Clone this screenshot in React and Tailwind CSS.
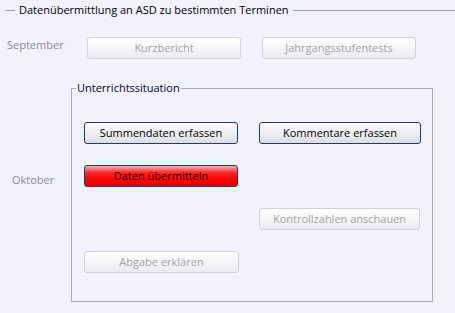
import React from 'react';

function Btn({ children, w = 'w-[154px]', variant = 'normal' }) {
  const styles = {
    normal:
      'border-[#1f3c72] text-black bg-[linear-gradient(to_bottom,#fdfdff_0%,#f0f0f6_45%,#dcdce6_100%)]',
    red: 'border-[#1f3c72] text-[#2a0000] bg-[linear-gradient(to_bottom,#ffb0b0_0%,#ff2020_35%,#ff0000_70%,#e40000_100%)]',
    disabled:
      'border-[#d2d2da] text-[#a2a2aa] bg-[linear-gradient(to_bottom,#ffffff_0%,#f6f6f9_50%,#eaeaf0_100%)]',
  };
  return (
    <div className={`${w} h-[22px] flex items-center justify-center rounded-[3px] border ${styles[variant]}`}>
      {children}
    </div>
  );
}

export default function App() {
  return (
    <div className="w-[455px] h-[313px] bg-[#f2f2fd] text-[11px] leading-4 text-black overflow-hidden font-['Open_Sans',sans-serif]">
      {/* Outer group header */}
      <div className="flex items-center pt-[2px] pl-[5px]">
        <div className="w-[10px] h-px bg-[#a0a0a8]"></div>
        <span className="px-[4px]">Datenübermittlung an ASD zu bestimmten Terminen</span>
        <div className="flex-1 h-px bg-[#a0a0a8]"></div>
      </div>

      {/* September row */}
      <div className="flex mt-[19px]">
        <div className="w-[87px] pl-[7px] text-[#8c8c98]">September</div>
        <div className="flex gap-[21px]">
          <Btn variant="disabled">Kurzbericht</Btn>
          <Btn variant="disabled">Jahrgangsstufentests</Btn>
        </div>
      </div>

      {/* Oktober row */}
      <div className="flex mt-[21px]">
        <div className="w-[71px] pl-[12px] pt-[92px] text-[#8c8c98]">Oktober</div>
        <div className="w-[362px] h-[222px] flex flex-col">
          <div className="flex items-center h-4">
            <div className="w-px h-[8px] self-end bg-[#a9a9b8]"></div>
            <div className="w-[4px] h-px bg-[#a9a9b8]"></div>
            <span className="px-[1px] text-[#000030]">Unterrichtssituation</span>
            <div className="flex-1 h-px bg-[#a9a9b8]"></div>
            <div className="w-px h-[8px] self-end bg-[#a9a9b8]"></div>
          </div>
          <div className="flex-1 border-x border-b border-[#a9a9b8] pl-[12px] pt-[26px]">
            <div className="grid grid-cols-[154px_162px] gap-x-[21px] gap-y-[21px]">
              <Btn>Summendaten erfassen</Btn>
              <Btn w="w-[162px]">Kommentare erfassen</Btn>
              <Btn variant="red">Daten übermitteln</Btn>
              <div></div>
              <div></div>
              <Btn w="w-[161px]" variant="disabled">Kontrollzahlen anschauen</Btn>
              <Btn w="w-[155px]" variant="disabled">Abgabe erklären</Btn>
              <div></div>
            </div>
          </div>
        </div>
      </div>
    </div>
  );
}
